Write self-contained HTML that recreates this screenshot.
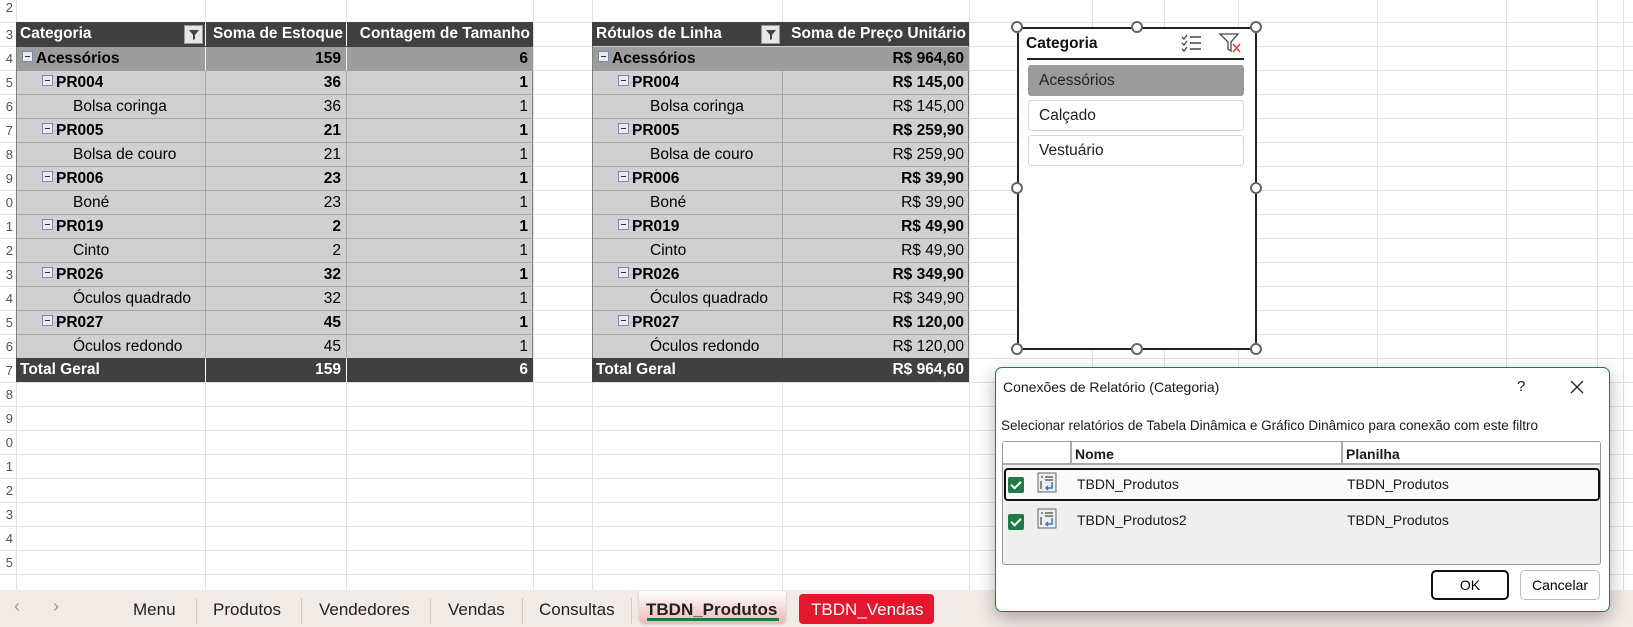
<!DOCTYPE html>
<html><head><meta charset="utf-8"><style>
*{margin:0;padding:0;box-sizing:border-box}
body{width:1633px;height:627px;overflow:hidden;background:#fff;font-family:"Liberation Sans",sans-serif;position:relative}
.a{position:absolute}
.vl{position:absolute;top:0;width:1px;height:590px;background:#e1e1e1}
.hl{position:absolute;left:0;width:1633px;height:1px;background:#e1e1e1}
.rn{position:absolute;left:0;width:13px;font-size:13px;color:#555;text-align:right;overflow:hidden}
.c{position:absolute;height:24px;line-height:24px;font-size:15.5px;color:#000;white-space:nowrap;overflow:hidden}
.b{font-weight:bold}
.r{text-align:right;padding-right:5px}
.m{display:inline-block;width:11px;height:11px;border:1px solid #7a8aa6;background:#e8ecf2;vertical-align:middle;position:relative;margin-right:3px;top:-2px}
.m:after{content:"";position:absolute;left:2px;top:4px;width:5px;height:1px;background:#333}
.h{background:#404040;color:#fff;font-weight:bold}
.l0{background:#9d9d9d}
.rowl{position:absolute;height:1px;background:#a6a6a6}
.hd{position:absolute;width:12px;height:12px;border:2px solid #666;border-radius:50%;background:#fff}
.it{position:absolute;left:1028px;width:216px;height:31px;border:1px solid #d6d6d6;border-radius:3px;font-size:15.5px;line-height:30px;padding-left:10px;color:#222}
.tab{position:absolute;top:598px;font-size:17px;color:#222;height:24px;line-height:24px}
.sep{position:absolute;top:598px;width:1px;height:26px;background:#cfcac6}
.dt{font-size:14px;color:#1a1a1a;position:absolute;white-space:nowrap}
.chk{position:absolute;width:16px;height:16px;background:#1e7b45;border-radius:2px}
.chk:after{content:"";position:absolute;left:5px;top:2px;width:4px;height:8px;border:solid #fff;border-width:0 2px 2px 0;transform:rotate(45deg)}
</style></head><body>

<div class="vl" style="left:16px"></div><div class="vl" style="left:205px"></div><div class="vl" style="left:346px"></div><div class="vl" style="left:533px"></div><div class="vl" style="left:592px"></div><div class="vl" style="left:782px"></div><div class="vl" style="left:969px"></div><div class="vl" style="left:1092px"></div><div class="vl" style="left:1164px"></div><div class="vl" style="left:1238px"></div><div class="vl" style="left:1377px"></div><div class="vl" style="left:1506px"></div><div class="vl" style="left:1597px"></div><div class="vl" style="left:1623px"></div>
<div class="hl" style="top:22px"></div><div class="hl" style="top:46px"></div><div class="hl" style="top:70px"></div><div class="hl" style="top:94px"></div><div class="hl" style="top:118px"></div><div class="hl" style="top:142px"></div><div class="hl" style="top:166px"></div><div class="hl" style="top:190px"></div><div class="hl" style="top:214px"></div><div class="hl" style="top:238px"></div><div class="hl" style="top:262px"></div><div class="hl" style="top:286px"></div><div class="hl" style="top:310px"></div><div class="hl" style="top:334px"></div><div class="hl" style="top:358px"></div><div class="hl" style="top:382px"></div><div class="hl" style="top:406px"></div><div class="hl" style="top:430px"></div><div class="hl" style="top:454px"></div><div class="hl" style="top:478px"></div><div class="hl" style="top:502px"></div><div class="hl" style="top:526px"></div><div class="hl" style="top:550px"></div><div class="hl" style="top:574px"></div>
<div class="rn" style="top:0">2</div><div class="rn" style="top:27px">3</div><div class="rn" style="top:51px">4</div><div class="rn" style="top:75px">5</div><div class="rn" style="top:99px">6</div><div class="rn" style="top:123px">7</div><div class="rn" style="top:147px">8</div><div class="rn" style="top:171px">9</div><div class="rn" style="top:195px">0</div><div class="rn" style="top:219px">1</div><div class="rn" style="top:243px">2</div><div class="rn" style="top:267px">3</div><div class="rn" style="top:291px">4</div><div class="rn" style="top:315px">5</div><div class="rn" style="top:339px">6</div><div class="rn" style="top:363px">7</div><div class="rn" style="top:387px">8</div><div class="rn" style="top:411px">9</div><div class="rn" style="top:435px">0</div><div class="rn" style="top:459px">1</div><div class="rn" style="top:483px">2</div><div class="rn" style="top:507px">3</div><div class="rn" style="top:531px">4</div><div class="rn" style="top:555px">5</div>

<!-- TABLE 1 -->
<div class="a" style="left:16px;top:22px;width:517px;height:360px;background:#d0d0d0;border:1px solid #808080"></div>
<div class="c h" style="left:16px;top:22px;width:517px;height:25px"></div>
<div class="c h" style="left:16px;top:22px;width:189px;padding-left:4px">Categoria</div>
<div class="a" style="left:184px;top:25px;width:19px;height:19px;background:#e6e6e6;border:1px solid #999"><svg width="17" height="17"><path d="M4 4h10l-4 5v4l-2 1v-5z" fill="#444"/></svg></div>
<div class="c h r" style="left:205px;top:22px;width:141px;border-left:1px solid #fff;padding-right:3px">Soma de Estoque</div>
<div class="c h r" style="left:346px;top:22px;width:187px;border-left:1px solid #fff;padding-right:3px">Contagem de Tamanho</div>

<div class="c l0 b" style="left:17px;top:47px;width:188px;padding-left:5px"><span class="m"></span>Acessórios</div>
<div class="c l0 b r" style="left:205px;top:47px;width:141px;border-left:1px solid #eee">159</div>
<div class="c l0 b r" style="left:346px;top:47px;width:187px;border-left:1px solid #eee">6</div>

<div class="c b" style="left:17px;top:71px;padding-left:25px"><span class="m"></span>PR004</div><div class="c b r" style="left:205px;top:71px;width:141px">36</div><div class="c b r" style="left:346px;top:71px;width:187px">1</div>
<div class="c" style="left:73px;top:95px">Bolsa coringa</div><div class="c r" style="left:205px;top:95px;width:141px">36</div><div class="c r" style="left:346px;top:95px;width:187px">1</div>
<div class="c b" style="left:17px;top:119px;padding-left:25px"><span class="m"></span>PR005</div><div class="c b r" style="left:205px;top:119px;width:141px">21</div><div class="c b r" style="left:346px;top:119px;width:187px">1</div>
<div class="c" style="left:73px;top:143px">Bolsa de couro</div><div class="c r" style="left:205px;top:143px;width:141px">21</div><div class="c r" style="left:346px;top:143px;width:187px">1</div>
<div class="c b" style="left:17px;top:167px;padding-left:25px"><span class="m"></span>PR006</div><div class="c b r" style="left:205px;top:167px;width:141px">23</div><div class="c b r" style="left:346px;top:167px;width:187px">1</div>
<div class="c" style="left:73px;top:191px">Boné</div><div class="c r" style="left:205px;top:191px;width:141px">23</div><div class="c r" style="left:346px;top:191px;width:187px">1</div>
<div class="c b" style="left:17px;top:215px;padding-left:25px"><span class="m"></span>PR019</div><div class="c b r" style="left:205px;top:215px;width:141px">2</div><div class="c b r" style="left:346px;top:215px;width:187px">1</div>
<div class="c" style="left:73px;top:239px">Cinto</div><div class="c r" style="left:205px;top:239px;width:141px">2</div><div class="c r" style="left:346px;top:239px;width:187px">1</div>
<div class="c b" style="left:17px;top:263px;padding-left:25px"><span class="m"></span>PR026</div><div class="c b r" style="left:205px;top:263px;width:141px">32</div><div class="c b r" style="left:346px;top:263px;width:187px">1</div>
<div class="c" style="left:73px;top:287px">Óculos quadrado</div><div class="c r" style="left:205px;top:287px;width:141px">32</div><div class="c r" style="left:346px;top:287px;width:187px">1</div>
<div class="c b" style="left:17px;top:311px;padding-left:25px"><span class="m"></span>PR027</div><div class="c b r" style="left:205px;top:311px;width:141px">45</div><div class="c b r" style="left:346px;top:311px;width:187px">1</div>
<div class="c" style="left:73px;top:335px">Óculos redondo</div><div class="c r" style="left:205px;top:335px;width:141px">45</div><div class="c r" style="left:346px;top:335px;width:187px">1</div>
<div class="rowl" style="left:17px;top:94px;width:516px"></div><div class="rowl" style="left:17px;top:118px;width:516px"></div><div class="rowl" style="left:17px;top:142px;width:516px"></div><div class="rowl" style="left:17px;top:166px;width:516px"></div><div class="rowl" style="left:17px;top:190px;width:516px"></div><div class="rowl" style="left:17px;top:214px;width:516px"></div><div class="rowl" style="left:17px;top:238px;width:516px"></div><div class="rowl" style="left:17px;top:262px;width:516px"></div><div class="rowl" style="left:17px;top:286px;width:516px"></div><div class="rowl" style="left:17px;top:310px;width:516px"></div><div class="rowl" style="left:17px;top:334px;width:516px"></div>
<div class="a" style="left:205px;top:71px;width:1px;height:288px;background:#a6a6a6"></div><div class="a" style="left:346px;top:71px;width:1px;height:288px;background:#a6a6a6"></div>
<div class="c h" style="left:16px;top:358px;width:189px;padding-left:4px">Total Geral</div>
<div class="c h r" style="left:205px;top:358px;width:141px;border-left:1px solid #fff">159</div>
<div class="c h r" style="left:346px;top:358px;width:187px;border-left:1px solid #fff">6</div>

<!-- TABLE 2 -->
<div class="a" style="left:592px;top:22px;width:377px;height:360px;background:#d0d0d0;border:1px solid #808080"></div>
<div class="c h" style="left:592px;top:22px;width:190px;padding-left:4px">Rótulos de Linha</div>
<div class="a" style="left:761px;top:25px;width:19px;height:19px;background:#e6e6e6;border:1px solid #999"><svg width="17" height="17"><path d="M4 4h10l-4 5v4l-2 1v-5z" fill="#444"/></svg></div>
<div class="c h r" style="left:782px;top:22px;width:187px;padding-right:3px">Soma de Preço Unitário</div>
<div class="c l0 b" style="left:593px;top:47px;width:189px;padding-left:5px"><span class="m"></span>Acessórios</div>
<div class="c l0 b r" style="left:782px;top:47px;width:187px">R$ 964,60</div>
<div class="c b" style="left:593px;top:71px;padding-left:25px"><span class="m"></span>PR004</div><div class="c b r" style="left:782px;top:71px;width:187px">R$ 145,00</div>
<div class="c" style="left:650px;top:95px">Bolsa coringa</div><div class="c r" style="left:782px;top:95px;width:187px">R$ 145,00</div>
<div class="c b" style="left:593px;top:119px;padding-left:25px"><span class="m"></span>PR005</div><div class="c b r" style="left:782px;top:119px;width:187px">R$ 259,90</div>
<div class="c" style="left:650px;top:143px">Bolsa de couro</div><div class="c r" style="left:782px;top:143px;width:187px">R$ 259,90</div>
<div class="c b" style="left:593px;top:167px;padding-left:25px"><span class="m"></span>PR006</div><div class="c b r" style="left:782px;top:167px;width:187px">R$ 39,90</div>
<div class="c" style="left:650px;top:191px">Boné</div><div class="c r" style="left:782px;top:191px;width:187px">R$ 39,90</div>
<div class="c b" style="left:593px;top:215px;padding-left:25px"><span class="m"></span>PR019</div><div class="c b r" style="left:782px;top:215px;width:187px">R$ 49,90</div>
<div class="c" style="left:650px;top:239px">Cinto</div><div class="c r" style="left:782px;top:239px;width:187px">R$ 49,90</div>
<div class="c b" style="left:593px;top:263px;padding-left:25px"><span class="m"></span>PR026</div><div class="c b r" style="left:782px;top:263px;width:187px">R$ 349,90</div>
<div class="c" style="left:650px;top:287px">Óculos quadrado</div><div class="c r" style="left:782px;top:287px;width:187px">R$ 349,90</div>
<div class="c b" style="left:593px;top:311px;padding-left:25px"><span class="m"></span>PR027</div><div class="c b r" style="left:782px;top:311px;width:187px">R$ 120,00</div>
<div class="c" style="left:650px;top:335px">Óculos redondo</div><div class="c r" style="left:782px;top:335px;width:187px">R$ 120,00</div>
<div class="rowl" style="left:593px;top:94px;width:376px"></div><div class="rowl" style="left:593px;top:118px;width:376px"></div><div class="rowl" style="left:593px;top:142px;width:376px"></div><div class="rowl" style="left:593px;top:166px;width:376px"></div><div class="rowl" style="left:593px;top:190px;width:376px"></div><div class="rowl" style="left:593px;top:214px;width:376px"></div><div class="rowl" style="left:593px;top:238px;width:376px"></div><div class="rowl" style="left:593px;top:262px;width:376px"></div><div class="rowl" style="left:593px;top:286px;width:376px"></div><div class="rowl" style="left:593px;top:310px;width:376px"></div><div class="rowl" style="left:593px;top:334px;width:376px"></div>
<div class="a" style="left:782px;top:71px;width:1px;height:288px;background:#a6a6a6"></div>
<div class="c h" style="left:592px;top:358px;width:190px;padding-left:4px">Total Geral</div>
<div class="c h r" style="left:782px;top:358px;width:187px">R$ 964,60</div>

<!-- SLICER -->
<div class="a" style="left:1017px;top:27px;width:240px;height:323px;background:#fff;border:2px solid #222"></div>
<div class="a b" style="left:1026px;top:35px;font-size:15.5px;font-weight:bold;color:#111">Categoria</div>
<svg class="a" style="left:1180px;top:32px" width="24" height="22"><path d="M2 5l2 2 3-4M2 11l2 2 3-4M2 17l2 2 3-4" stroke="#444" fill="none" stroke-width="1.3"/><path d="M10 5h11M10 11h11M10 17h11" stroke="#444" stroke-width="1.5"/></svg>
<svg class="a" style="left:1218px;top:32px" width="26" height="22"><path d="M2 2h18l-7 8v9l-3-2v-7z" fill="none" stroke="#444" stroke-width="1.3"/><path d="M15 12l7 8M22 12l-7 8" stroke="#e33" stroke-width="1.4"/></svg>
<div class="a" style="left:1027px;top:58px;width:217px;height:2px;background:#222"></div>
<div class="it" style="top:65px;background:#9b9b9b;border-color:#9b9b9b">Acessórios</div>
<div class="it" style="top:100px">Calçado</div>
<div class="it" style="top:135px">Vestuário</div>
<div class="hd" style="left:1011px;top:21px"></div><div class="hd" style="left:1131px;top:21px"></div><div class="hd" style="left:1250px;top:21px"></div>
<div class="hd" style="left:1011px;top:182px"></div><div class="hd" style="left:1250px;top:182px"></div>
<div class="hd" style="left:1011px;top:343px"></div><div class="hd" style="left:1131px;top:343px"></div><div class="hd" style="left:1250px;top:343px"></div>

<!-- TAB BAR -->
<div class="a" style="left:0;top:590px;width:1633px;height:37px;background:#f0ebe7"></div>
<div class="a" style="left:14px;top:596px;font-size:18px;color:#999">‹</div>
<div class="a" style="left:53px;top:596px;font-size:18px;color:#999">›</div>
<div class="tab" style="left:133px">Menu</div><div class="sep" style="left:196px"></div>
<div class="tab" style="left:213px">Produtos</div><div class="sep" style="left:301px"></div>
<div class="tab" style="left:319px">Vendedores</div><div class="sep" style="left:430px"></div>
<div class="tab" style="left:448px">Vendas</div><div class="sep" style="left:522px"></div>
<div class="tab" style="left:539px">Consultas</div><div class="sep" style="left:631px"></div>
<div class="a" style="left:639px;top:591px;width:147px;height:32px;background:linear-gradient(#fff,#eeb8b8);border-radius:0 0 5px 5px;box-shadow:0 1px 2px #bbb"></div>
<div class="tab b" style="left:646px;font-weight:bold">TBDN_Produtos</div>
<div class="a" style="left:647px;top:618px;width:132px;height:3px;background:#1e7b45"></div>
<div class="a" style="left:799px;top:594px;width:135px;height:30px;background:#e3172d;border-radius:4px"></div>
<div class="tab" style="left:811px;color:#fff">TBDN_Vendas</div>

<!-- DIALOG -->
<div class="a" style="left:995px;top:367px;width:615px;height:245px;background:#fff;border:1px solid #1e7b45;border-radius:7px;box-shadow:0 6px 18px rgba(0,0,0,.3)"></div>
<div class="dt" style="left:1003px;top:379px">Conexões de Relatório (Categoria)</div>
<div class="dt" style="left:1517px;top:378px;font-size:15px">?</div>
<svg class="a" style="left:1570px;top:380px" width="14" height="14"><path d="M1 1l12 12M13 1L1 13" stroke="#222" stroke-width="1.3"/></svg>
<div class="dt" style="left:1001px;top:418px;font-size:13.5px">Selecionar relatórios de Tabela Dinâmica e Gráfico Dinâmico para conexão com este filtro</div>
<div class="a" style="left:1002px;top:441px;width:599px;height:124px;background:#efefef;border:1px solid #999;border-radius:3px"></div>
<div class="a" style="left:1003px;top:442px;width:597px;height:23px;background:#fff;border-bottom:2px solid #aaa"></div>
<div class="a" style="left:1070px;top:442px;width:2px;height:23px;background:#aaa"></div>
<div class="a" style="left:1341px;top:442px;width:2px;height:23px;background:#aaa"></div>
<div class="dt b" style="left:1075px;top:446px;font-weight:bold">Nome</div>
<div class="dt b" style="left:1346px;top:446px;font-weight:bold">Planilha</div>
<div class="a" style="left:1004px;top:468px;width:596px;height:33px;background:#fafafa;border:2px solid #111;border-radius:4px"></div>
<div class="chk" style="left:1008px;top:477px"></div>
<svg class="a" style="left:1037px;top:472px" width="20" height="21"><rect x="1" y="1" width="18" height="19" fill="#eee" stroke="#666"/><path d="M4 5h2M8 5h8M4 9v8M8 8h8" stroke="#888" stroke-width="2"/><path d="M15 10v6h-5M11 14l-2 2 2 2" stroke="#2a7ad6" stroke-width="1.5" fill="none"/></svg>
<div class="dt" style="left:1077px;top:476px">TBDN_Produtos</div>
<div class="dt" style="left:1347px;top:476px">TBDN_Produtos</div>
<div class="chk" style="left:1008px;top:514px"></div>
<svg class="a" style="left:1037px;top:508px" width="20" height="21"><rect x="1" y="1" width="18" height="19" fill="#eee" stroke="#666"/><path d="M4 5h2M8 5h8M4 9v8M8 8h8" stroke="#888" stroke-width="2"/><path d="M15 10v6h-5M11 14l-2 2 2 2" stroke="#2a7ad6" stroke-width="1.5" fill="none"/></svg>
<div class="dt" style="left:1077px;top:512px">TBDN_Produtos2</div>
<div class="dt" style="left:1347px;top:512px">TBDN_Produtos</div>
<div class="a" style="left:1431px;top:570px;width:78px;height:30px;border:2px solid #111;border-radius:5px;font-size:14px;text-align:center;line-height:26px">OK</div>
<div class="a" style="left:1520px;top:570px;width:80px;height:30px;border:1px solid #bbb;border-radius:5px;font-size:14px;text-align:center;line-height:28px">Cancelar</div>
</body></html>
